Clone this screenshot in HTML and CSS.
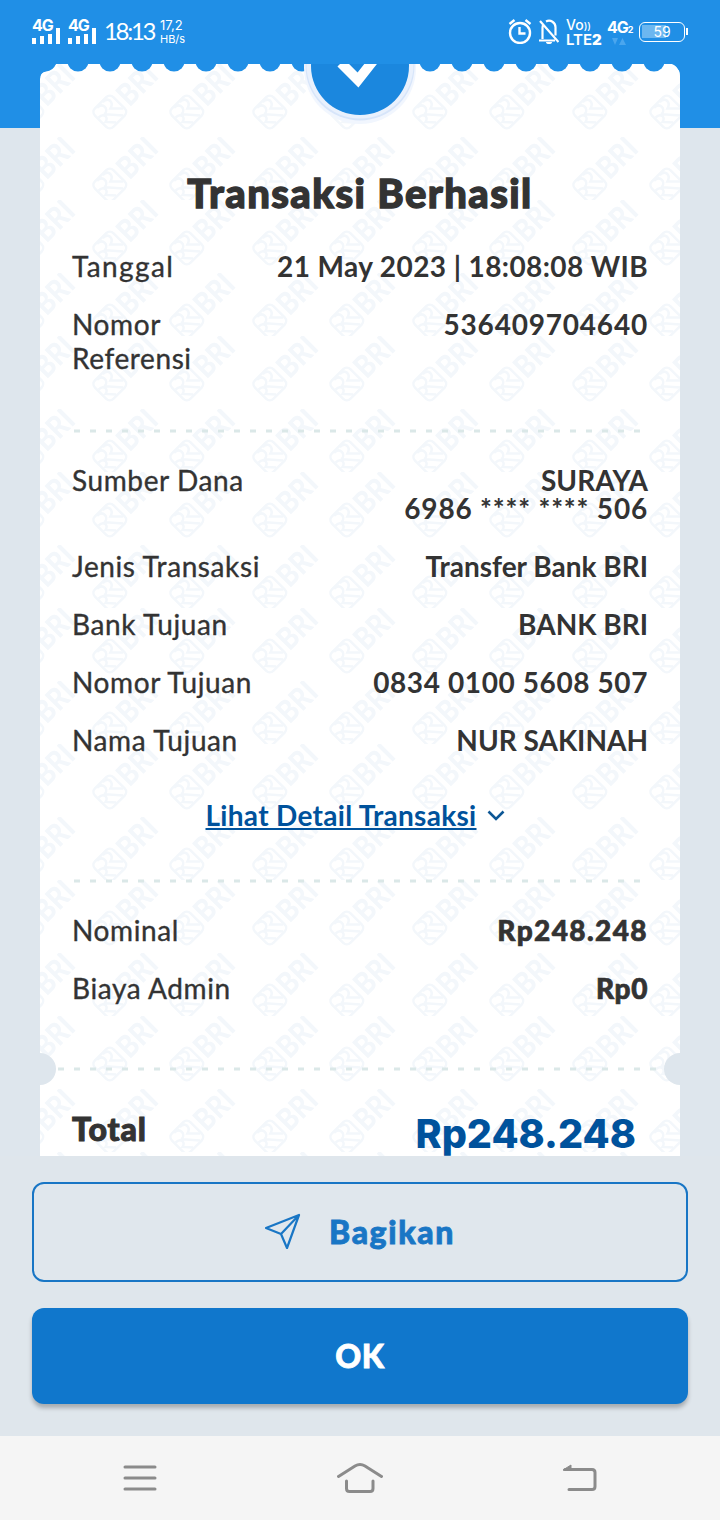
FILE: index.html
```html
<!DOCTYPE html>
<html lang="id">
  <head>
    <meta charset="UTF-8" />
    <meta name="viewport" content="width=device-width, initial-scale=1.0" />
    <title>Transaksi Berhasil</title>
    <link rel="stylesheet" href="styles.css">
  </head>
  <body>
    <header class="statusbar">
      <div class="signal">
        <span>4G</span>
        <svg width="28" height="16" viewBox="0 0 28 16" fill="#fff"><path d="M0 10h4v6H0zM8 8h4v8H8zM16 6h4v10h-4zM24 0h4v16h-4z" /></svg>
      </div>
      <div class="signal">
        <span>4G</span>
        <svg width="28" height="16" viewBox="0 0 28 16" fill="#fff"><path d="M0 10h4v6H0zM8 8h4v8H8zM16 6h4v10h-4zM24 0h4v16h-4z" /></svg>
      </div>
      <span class="clock">18:13</span>
      <div class="speed"><span>17,2</span><span class="unit">HB/s</span></div>
      <div class="status-right">
        <svg class="alarm" width="24" height="26" viewBox="0 0 24 26" fill="none" stroke="#fff" stroke-width="2.400">
          <circle cx="12" cy="15" r="10" />
          <path d="M11.500 9v6.500h6M1.500 6l5-4M17.500 2l5 4" />
        </svg>
        <svg class="bell" width="20" height="26" viewBox="0 0 20 26" fill="none" stroke="#fff" stroke-width="2.200">
          <path d="M3.500 21V9.500a7 7 0 0 1 1-3.500M7 3.500a6.500 6.500 0 0 1 9.500 6v8M0 22.500h16M1 3l18.500 21" />
          <path d="M7 24h6a3 2 0 0 1-6 0z" fill="#fff" stroke="none" />
        </svg>
        <div class="volte"><span>Vo<i>))</i></span><span class="lte">LTE<b>2</b></span></div>
        <div class="data"><span>4G<small>2</small></span>
          <svg width="14" height="7" viewBox="0 0 14 7" fill="#4aa6ee"><path d="M0 0h6L3 7zM7 7h7L10.500 0z" /></svg>
        </div>
        <div class="battery"><span>59</span></div>
      </div>
    </header>

    <main class="receipt">
      <svg class="paper" width="640" height="1092" viewBox="0 0 640 1092">
        <defs>
          <pattern id="scallop" x="22" y="0" width="32" height="8" patternUnits="userSpaceOnUse">
            <circle cx="16" cy="-3" r="10.600" fill="#208fe6" />
          </pattern>
          <g id="mark">
            <g transform="translate(-1 48) rotate(-45)" fill="none" stroke="#f3f7fb" stroke-width="2.500">
              <rect x="1" y="1" width="26" height="26" rx="5" />
              <path d="M8 2c8 0 8 9 1 10l12 14M16 2c8 0 8 8 1 10l9 9M2 10c7 0 8 7 2 8l7 8" />
              <text class="mark-text" x="31" y="25" textLength="43" lengthAdjust="spacingAndGlyphs">BRI</text>
            </g>
          </g>
          <clipPath id="cut"><rect width="90" height="63" /></clipPath>
          <pattern id="watermark" x="48" y="0" width="160" height="136" patternUnits="userSpaceOnUse">
            <use href="#mark" x="3" y="0" />
            <use href="#mark" x="80" y="0" />
            <g transform="translate(3 73)"><g clip-path="url(#cut)"><use href="#mark" /></g></g>
            <g transform="translate(80 73)"><g clip-path="url(#cut)"><use href="#mark" /></g></g>
          </pattern>
        </defs>
        <path d="M0 1092V15q0-7 6-8L16 0H632q4 1 8 8V1092z" fill="#fff" />
        <path d="M0 1092V15q0-7 6-8L16 0H632q4 1 8 8V1092z" fill="url(#watermark)" />
        <rect x="22" width="602" height="8" fill="url(#scallop)" />
        <path d="M0 0H16Q13 7 6 7.500Q0 8 0 15zM632 0Q636 0 638 5Q640 7 640 12V0z" fill="#208fe6" />
        <g fill="none" stroke="#dbe8e8" stroke-width="3" stroke-dasharray="6 10">
          <path d="M34 367H600M34 817H600M18 1005H624" />
        </g>
        <circle cx="0" cy="1005" r="16" fill="#dee6ed" />
        <circle cx="640" cy="1005" r="16" fill="#dee6ed" />
      </svg>

      <svg class="badge" width="120" height="66" viewBox="0 0 120 66">
        <circle cx="60" cy="4" r="56" fill="#f1f6fe" />
        <circle cx="60" cy="2" r="54.500" fill="#d7e5fa" />
        <circle cx="60" cy="1" r="53.500" fill="#e9f1fd" />
        <circle cx="60" cy="2" r="49" fill="#1b87de" />
        <path d="M41-1l17 17L73-3" fill="none" stroke="#fff" stroke-width="10" />
      </svg>

      <div class="content">
        <h1>Transaksi Berhasil</h1>
        <dl class="rows top">
          <div><dt class="wide">Tanggal</dt><dd class="date">21 May 2023 | 18:08:08 WIB</dd></div>
          <div class="tall"><dt>Nomor<br>Referensi</dt><dd class="digits">536409704640</dd></div>
        </dl>
        <dl class="rows middle">
          <div class="source"><dt>Sumber Dana</dt><dd>SURAYA<br><span class="digits">6986 **** **** 506</span></dd></div>
          <div><dt>Jenis Transaksi</dt><dd>Transfer Bank BRI</dd></div>
          <div><dt>Bank Tujuan</dt><dd>BANK BRI</dd></div>
          <div><dt>Nomor Tujuan</dt><dd class="account">0834 0100 5608 507</dd></div>
          <div><dt>Nama Tujuan</dt><dd>NUR SAKINAH</dd></div>
        </dl>
        <div class="detail">
          <a>Lihat Detail Transaksi</a>
          <svg width="18" height="12" viewBox="0 0 18 12" fill="none" stroke="#0d5795" stroke-width="2.600"><path d="M1.500 2.500L9 10l7.500-7.500" /></svg>
        </div>
        <dl class="rows amount">
          <div><dt>Nominal</dt><dd>Rp248.248</dd></div>
          <div><dt>Biaya Admin</dt><dd class="fee">Rp0</dd></div>
        </dl>
        <div class="total"><span>Total</span><strong>Rp248.248</strong></div>
      </div>
    </main>

    <section class="actions">
      <button class="share">
        <svg width="36" height="36" viewBox="0 0 36 36" fill="none" stroke="#1976c5" stroke-width="2.200" stroke-linejoin="round"><path d="M1 15L34 2 22 35 16 21zM16 21L34 2" /></svg>
        <span>Bagikan</span>
      </button>
      <button class="ok">OK</button>
    </section>

    <nav class="navbar">
      <svg width="34" height="28" viewBox="0 0 34 28"><path d="M2 3h30M2 14h30M2 25h30" /></svg>
      <svg width="46" height="32" viewBox="0 0 46 32"><path d="M1.500 14.500L18 4q5-3 10 0L44.500 14.500M9.500 19v7.500q0 3 3 3h20.500q3 0 3-3V19" /></svg>
      <svg width="34" height="30" viewBox="0 0 34 30"><path d="M2 6.500h27q3 0 3 3v14q0 3-3 3H6" /><path d="M0 7l8-5V7z" fill="#8b8b8b" stroke-width="1" /></svg>
    </nav>
  </body>
</html>
```

FILE: styles.css
```css
* {
  box-sizing: border-box;
}
body {
  margin: 0;
  width: 720px;
  height: 1520px;
  overflow: hidden;
  display: flex;
  flex-direction: column;
  font-family: Lato, "Open Sans", sans-serif;
  color: #333;
  background: linear-gradient(#208fe6 128px, #dee6ed 128px);
}
h1,
dl,
dd {
  margin: 0;
}
svg {
  display: block;
  flex: none;
}

/* status bar */
.statusbar {
  height: 64px;
  flex: none;
  display: flex;
  align-items: flex-start;
  padding: 18px 32px 0;
  color: #fff;
  font-family: Inter, sans-serif;
}
.signal {
  width: 36px;
  height: 26px;
  display: flex;
  flex-direction: column;
  justify-content: space-between;
  font-size: 16px;
  font-weight: 700;
  line-height: 14px;
  letter-spacing: -1px;
}
.signal span {
  height: 9px;
}
.clock {
  font-family: Lato, sans-serif;
  font-size: 24px;
  line-height: 26px;
  width: 56px;
  letter-spacing: -2.3px;
}
.speed {
  display: flex;
  flex-direction: column;
  font-size: 13px;
  line-height: 14px;
}
.unit {
  font-size: 11px;
  line-height: 15px;
}
.status-right {
  margin-left: auto;
  display: flex;
}
.bell {
  margin-left: 7px;
}
.volte {
  width: 37px;
  margin-left: 7px;
  display: flex;
  flex-direction: column;
  font-size: 14px;
  font-weight: 500;
  line-height: 14px;
}
.volte i {
  font-style: normal;
  font-size: 10px;
}
.lte {
  font-size: 15px;
  font-weight: 600;
}
.data {
  width: 25px;
  margin-left: 4px;
  font-size: 16px;
  font-weight: 700;
  line-height: 19px;
  letter-spacing: -1px;
}
.data small {
  font-size: 9px;
}
.data svg {
  margin: -1px 0 0 5px;
}
.battery {
  position: relative;
  width: 46px;
  height: 20px;
  margin: 4px 3px 0 7px;
  border: 1.5px solid #fff;
  border-radius: 6px;
  background: linear-gradient(#6cb7f0, #6cb7f0) 2px 2px / 24px 13px no-repeat;
  text-align: center;
  font-size: 14px;
  line-height: 17px;
}
.battery::after {
  content: "";
  position: absolute;
  right: -4px;
  top: 5px;
  width: 2px;
  height: 7px;
  background: #fff;
}

/* receipt */
.receipt {
  position: relative;
  width: 640px;
  height: 1092px;
  flex: none;
  margin: 0 auto;
  overflow: hidden;
}
.paper {
  position: absolute;
  top: 0;
  left: 0;
}
.mark-text {
  font: 900 31px Lato, sans-serif;
  fill: #f3f7fb;
  stroke: none;
}
.badge {
  position: absolute;
  top: 0;
  left: 260px;
}
.content {
  position: relative;
  padding: 104px 32px 0;
}
h1 {
  height: 50px;
  font-size: 40px;
  line-height: 50px;
  font-weight: 900;
  letter-spacing: 1.4px;
  text-align: center;
  -webkit-text-stroke: 1.3px #333;
}
.rows {
  font-size: 28px;
  line-height: 34px;
  display: flex;
  flex-direction: column;
  gap: 24px;
}
.rows div {
  display: flex;
  justify-content: space-between;
}
.rows dt {
  letter-spacing: 0.6px;
  -webkit-text-stroke: 0.35px #333;
}
.rows .wide {
  letter-spacing: 1.4px;
}
.rows dd {
  font-weight: 700;
  text-align: right;
  white-space: nowrap;
}
.date {
  letter-spacing: 0.4px;
}
.digits {
  letter-spacing: 0.8px;
}
.account {
  letter-spacing: 0.6px;
}
.top {
  padding-top: 31px;
}
.middle {
  padding-top: 88px;
}
.source {
  height: 62px;
}
.source dd {
  line-height: 28px;
  padding-top: 3px;
}
.detail {
  display: flex;
  justify-content: center;
  align-items: center;
  gap: 10px;
  margin-top: 41px;
  padding-right: 10px;
  height: 34px;
  font-size: 28px;
  font-weight: 700;
  letter-spacing: 0.3px;
  color: #00529c;
}
.detail a {
  text-decoration: underline;
}
.amount {
  padding-top: 81px;
}
.amount dd {
  font-weight: 900;
  letter-spacing: 1.4px;
  -webkit-text-stroke: 0.7px #333;
}
.amount .fee {
  letter-spacing: 0.6px;
}
.total {
  display: flex;
  justify-content: space-between;
  margin-top: 99px;
  padding-right: 12px;
  font-size: 32px;
  line-height: 50px;
  font-weight: 900;
}
.total span {
  letter-spacing: 0.9px;
  -webkit-text-stroke: 1px #333;
}
.total strong {
  padding-top: 5px;
  font-family: Inter, sans-serif;
  font-size: 39.5px;
  font-weight: 800;
  color: #00529c;
}

/* buttons */
.actions {
  height: 280px;
  flex: none;
  padding: 26px 32px 0;
  display: flex;
  flex-direction: column;
  gap: 26px;
  background: #dfe6ec;
}
.actions button {
  font-family: Lato, sans-serif;
  font-size: 32px;
  font-weight: 900;
  border-radius: 12px;
  display: flex;
  align-items: center;
  justify-content: center;
  padding-bottom: 3px;
  -webkit-text-stroke: 0.8px currentColor;
}
.share {
  height: 100px;
  gap: 28px;
  color: #1976c5;
  background: #e0e7ed;
  border: 2px solid #1976c5;
  letter-spacing: 1.6px;
}
.ok {
  height: 96px;
  color: #fff;
  background: #1077cc;
  border: 0;
  box-shadow: 0 4px 4px rgba(0, 0, 0, 0.25);
  letter-spacing: 0.6px;
}

/* android navigation */
.navbar {
  height: 84px;
  flex: none;
  background: #f5f5f5;
  display: flex;
  align-items: center;
  justify-content: space-between;
  padding: 0 123px;
}
.navbar svg {
  fill: none;
  stroke: #8b8b8b;
  stroke-width: 3;
  stroke-linecap: round;
}
```
